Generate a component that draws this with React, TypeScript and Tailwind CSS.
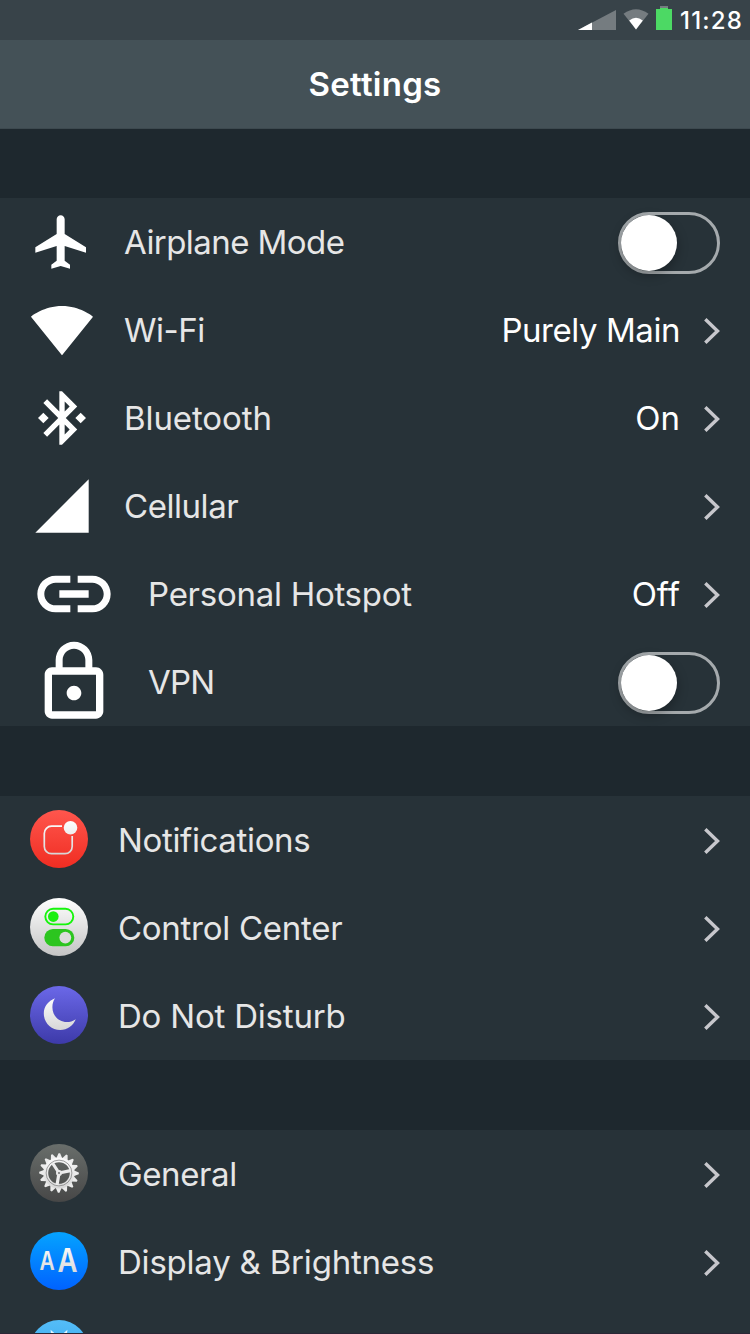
import type { ReactNode } from "react";

const FONT = "font-['Inter','Liberation_Sans',sans-serif]";

function GlyphIcon({ d, large = false }: { d: string; large?: boolean }) {
  return (
    <svg viewBox="0 0 24 24" className={large ? "size-[88px] shrink-0 fill-white" : "size-16 shrink-0 fill-white"}>
      <path d={d} />
    </svg>
  );
}

const AIRPLANE =
  "M21 16v-2l-8-5V3.5c0-.83-.67-1.5-1.5-1.5S10 2.67 10 3.5V9l-8 5v2l8-2.5V19l-2 1.5V22l3.5-1 3.5 1v-1.5L13 19v-5.5l8 2.5z";
const WIFI = "M12.01 21.49L23.64 7c-.45-.34-4.93-4-11.64-4C5.28 3 .81 6.66.36 7l11.63 14.49.01.01.01-.01z";
const BLUETOOTH =
  "M7 12l-2-2-2 2 2 2 2-2zm10.71-4.29L12 2h-1v7.59L6.41 5 5 6.41 10.59 12 5 17.59 6.41 19 11 14.41V22h1l5.71-5.71-4.3-4.29 4.3-4.29zM13 5.83l1.88 1.88L13 9.59V5.83zm1.88 10.46L13 18.17v-3.76l1.88 1.88zM19 10l-2 2 2 2 2-2-2-2z";
const CELLULAR = "M2 22h20V2z";
const LINK =
  "M3.9 12c0-1.71 1.39-3.1 3.1-3.1h4V7H7c-2.76 0-5 2.24-5 5s2.24 5 5 5h4v-1.9H7c-1.71 0-3.1-1.39-3.1-3.1zM8 13h8v-2H8v2zm9-6h-4v1.9h4c1.71 0 3.1 1.39 3.1 3.1s-1.39 3.1-3.1 3.1h-4V17h4c2.76 0 5-2.24 5-5s-2.24-5-5-5z";
const LOCK =
  "M12 17c1.1 0 2-.9 2-2s-.9-2-2-2-2 .9-2 2 .9 2 2 2zm6-9h-1V6c0-2.76-2.24-5-5-5S7 3.24 7 6v2H6c-1.1 0-2 .9-2 2v10c0 1.1.9 2 2 2h12c1.1 0 2-.9 2-2V10c0-1.1-.9-2-2-2zM8.9 6c0-1.71 1.39-3.1 3.1-3.1s3.1 1.39 3.1 3.1v2H8.9V6zM18 20H6V10h12v10z";

function Disc({ id, from, to, children }: { id: string; from: string; to: string; children: ReactNode }) {
  return (
    <svg viewBox="0 0 58 58" className="-mt-0.5 size-[58px] shrink-0">
      <defs>
        <linearGradient id={id} x1="0" y1="0" x2="0" y2="1">
          <stop offset="0" stopColor={from} />
          <stop offset="1" stopColor={to} />
        </linearGradient>
        <linearGradient id={`${id}-ink`} gradientUnits="userSpaceOnUse" x1="0" y1="10" x2="0" y2="48">
          <stop offset="0" stopColor="#ffffff" />
          <stop offset="1" stopColor="#d2d2d2" />
        </linearGradient>
      </defs>
      <circle cx="29" cy="29" r="29" fill={`url(#${id})`} />
      {children}
    </svg>
  );
}

function NotificationsIcon() {
  return (
    <Disc id="notif" from="#ff564d" to="#f02d22">
      <path
        d="M32 16.2H21.5a7.2 7.2 0 0 0-7.2 7.2V36.5a7.2 7.2 0 0 0 7.2 7.2H35a7.2 7.2 0 0 0 7.2-7.2V26"
        fill="none"
        stroke="url(#notif-ink)"
        strokeWidth="1.7"
      />
      <circle cx="40.5" cy="17.7" r="6.8" fill="url(#notif-ink)" />
    </Disc>
  );
}

function ControlCenterIcon() {
  return (
    <Disc id="control" from="#ffffff" to="#c4c4c4">
      <rect x="15.3" y="10.8" width="28" height="15.6" rx="7.8" fill="none" stroke="#16f50c" strokeWidth="1.9" />
      <circle cx="23.3" cy="18.6" r="5.3" fill="#1aef10" />
      <rect x="14.3" y="31" width="30" height="17.3" rx="8.65" fill="#2cc51f" />
      <circle cx="35.3" cy="39.6" r="5.9" fill="#dcdcdc" />
    </Disc>
  );
}

function MoonIcon() {
  return (
    <Disc id="moon" from="#6b68e8" to="#3d3aa9">
      <path
        d="M25 12.3C18.2 15 13.8 20.6 13.8 27.4C13.8 36.8 21 44 30.2 44C37.500 44 43 39.600 45.800 33.200C42.800 35.300 39.800 36 36.800 36C28.400 36 22.400 29.500 22.400 21.200C22.400 18 23.200 15 25 12.300Z"
        fill="url(#moon-ink)"
      />
    </Disc>
  );
}

const TEETH = Array.from({ length: 16 }, (_, i) => i * 22.5);

function GearIcon() {
  return (
    <Disc id="gear" from="#696e6b" to="#474747">
      {TEETH.map((angle) => (
        <path key={angle} d="M25.900 14.500L28.200 9.200H29.800L32.100 14.500Z" fill="#ececec" transform={`rotate(${angle + 1} 29 29)`} />
      ))}
      <circle cx="29" cy="29" r="13.200" fill="none" stroke="url(#gear-ink)" strokeWidth="4.800" />
      <circle cx="29" cy="29" r="12.900" fill="none" stroke="#777" strokeWidth="0.700" />
      <path d="M29 29L22.500 19M29 29L40.500 26.600M29 29L27 41" stroke="#ececec" strokeWidth="3.200" />
      <circle cx="29" cy="29" r="3" fill="#e8e8e8" />
      <circle cx="29" cy="29" r="0.900" fill="#666" />
    </Disc>
  );
}

function DisplayIcon() {
  return (
    <Disc id="display" from="#05a3ff" to="#0062ff">
      <text x="9.500" y="38.100" fontSize="25" textLength="15.200" lengthAdjust="spacingAndGlyphs" fontWeight="600" fill="url(#display-ink)">A</text>
      <text x="27.400" y="40.100" fontSize="33" textLength="20" lengthAdjust="spacingAndGlyphs" fontWeight="600" fill="url(#display-ink)">A</text>
    </Disc>
  );
}

function WallpaperIcon() {
  return (
    <Disc id="wall" from="#54bdf8" to="#2f9fe8">
      <path d="M20.600 9.800L27.600 16V24H22Z M37.400 9.800L30.400 16V24H36Z" fill="#e6f6ff" />
    </Disc>
  );
}

function Chevron() {
  return (
    <svg viewBox="0 0 16 26" className="mt-0.5 h-[26px] w-4 shrink-0 fill-none stroke-[#c7c7cc] stroke-[3.4]">
      <path d="M1.300 1.300L13.500 13L1.300 24.700" />
    </svg>
  );
}

function Toggle() {
  return (
    <div className="mt-0.5 flex h-[62px] w-[102px] shrink-0 rounded-full border-[3px] border-[#a5aaad]">
      <div className="size-14 rounded-full bg-white shadow-[0_4px_12px_rgba(0,0,0,0.3)]" />
    </div>
  );
}

interface RowProps {
  icon: ReactNode;
  label: string;
  labelClass: string;
  value?: string;
  valueClass?: string;
  toggle?: boolean;
}

function Row({ icon, label, labelClass, value, valueClass = "", toggle }: RowProps) {
  return (
    <div className="flex h-[88px] shrink-0 items-center px-[30px]">
      {icon}
      <span className={`ml-[30px] whitespace-nowrap text-[33px] leading-10 font-normal text-[#e6e6e6] ${labelClass}`}>{label}</span>
      <div className="ml-auto flex items-center gap-6">
        {value && <span className={`whitespace-nowrap text-[33px] leading-10 font-normal text-white ${valueClass}`}>{value}</span>}
        {toggle ? <Toggle /> : <Chevron />}
      </div>
    </div>
  );
}

function StatusBar() {
  return (
    <div className="flex h-10 shrink-0 items-end bg-[#384349] pr-2 pb-[10px]">
      <svg viewBox="0 0 38 20" className="ml-auto h-5 w-[38px]">
        <path d="M0 20L38 0V20Z" fill="#757c80" />
        <path d="M0 20L14 12.600V20Z" fill="#fff" />
      </svg>
      <svg viewBox="0 0 26 21" className="ml-[7px] h-[21px] w-[26px]">
        <path d="M0.500 4.800Q13-4.200 25.500 4.800L13 20.500Z" fill="#757c80" />
        <path d="M6.200 11.500Q13 6.200 19.800 11.500L13 20.500Z" fill="#fff" />
      </svg>
      <svg viewBox="0 0 16 24" className="ml-[7px] h-6 w-4">
        <path d="M4 0H12V3H4Z" fill="#757c80" />
        <path d="M0 3H4V2H12V3H16V24H0Z" fill="#4cd964" />
      </svg>
      <span className="ml-2 h-[19px] w-[62px] text-[24px] leading-5 font-medium tracking-[1.2px] whitespace-nowrap text-white">11:28</span>
    </div>
  );
}

export default function App() {
  return (
    <div className={`${FONT} flex h-[1334px] w-[750px] flex-col overflow-hidden border-b border-[#2b2636] bg-[#1e282e]`}>
      <StatusBar />
      <header className="flex h-[89px] shrink-0 items-center justify-center border-b border-[#3d494f] bg-[#445157]">
        <h1 className="text-[33px] leading-10 font-semibold tracking-[0.25px] text-white">Settings</h1>
      </header>

      <section className="mt-[69px] flex shrink-0 flex-col bg-[#273238]">
        <Row icon={<GlyphIcon d={AIRPLANE} />} label="Airplane Mode" labelClass="tracking-[-0.56px]" toggle />
        <Row icon={<GlyphIcon d={WIFI} />} label="Wi-Fi" labelClass="tracking-[-0.5px]" value="Purely Main" valueClass="tracking-[-0.45px]" />
        <Row icon={<GlyphIcon d={BLUETOOTH} />} label="Bluetooth" labelClass="tracking-[-0.1px]" value="On" />
        <Row icon={<GlyphIcon d={CELLULAR} />} label="Cellular" labelClass="tracking-[-0.45px]" />
        <Row icon={<GlyphIcon d={LINK} large />} label="Personal Hotspot" labelClass="tracking-[-0.27px]" value="Off" />
        <Row icon={<GlyphIcon d={LOCK} large />} label="VPN" labelClass="tracking-[-0.8px]" toggle />
      </section>

      <section className="mt-[70px] flex shrink-0 flex-col bg-[#273238]">
        <Row icon={<NotificationsIcon />} label="Notifications" labelClass="tracking-[-0.35px]" />
        <Row icon={<ControlCenterIcon />} label="Control Center" labelClass="tracking-[-0.27px]" />
        <Row icon={<MoonIcon />} label="Do Not Disturb" labelClass="tracking-[-0.2px]" />
      </section>

      <section className="mt-[70px] flex shrink-0 flex-col bg-[#273238]">
        <Row icon={<GearIcon />} label="General" labelClass="tracking-[-0.4px]" />
        <Row icon={<DisplayIcon />} label="Display &amp; Brightness" labelClass="tracking-[-0.21px]" />
        <div className="flex h-[88px] shrink-0 items-center px-[30px]">
          <WallpaperIcon />
        </div>
      </section>
    </div>
  );
}
